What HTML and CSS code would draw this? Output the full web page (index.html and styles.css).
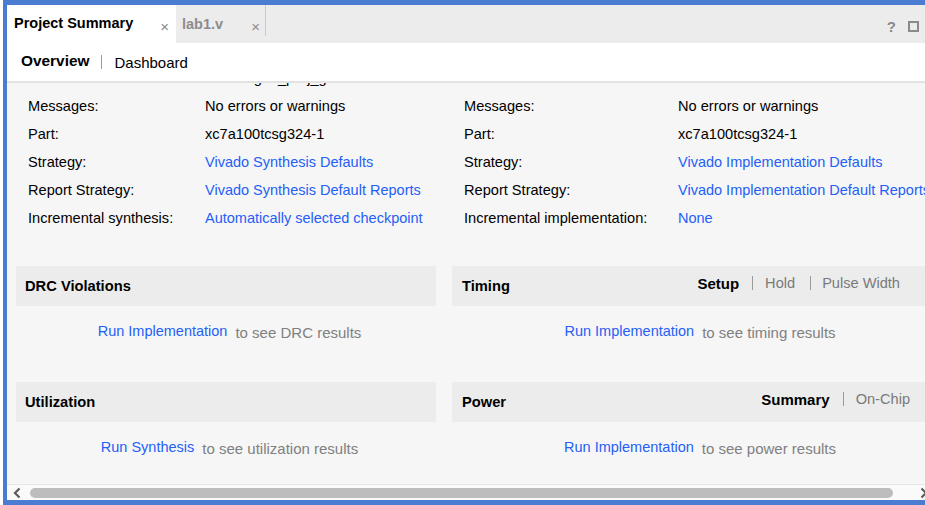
FILE: index.html
```html
<!DOCTYPE html>
<html>
<head>
<meta charset="utf-8">
<link rel="stylesheet" href="styles.css">
</head>
<body>
<div class="window">
  <div class="tabbar">
    <div class="tab active"><span class="tab-name">Project Summary</span><span class="close">×</span></div>
    <div class="tab other"><span class="tab-name">lab1.v</span><span class="close">×</span></div>
    <div class="icons">
      <span class="help">?</span>
      <span class="maxbox"></span>
    </div>
  </div>
  <div class="subtabs">
    <span class="sub active">Overview</span>
    <span class="vsep"></span>
    <span class="sub">Dashboard</span>
  </div>
  <div class="content">
    <div class="inner">
      <div class="props">
        <div class="col left">
          <div class="row cut"><span class="lbl"></span><span class="val">&nbsp;&nbsp;&nbsp;&nbsp;&nbsp;&nbsp;&nbsp;&nbsp;&nbsp;&nbsp;&nbsp; g&nbsp;&nbsp;&nbsp; _proj_g</span></div>
          <div class="row"><span class="lbl">Messages:</span><span class="val">No errors or warnings</span></div>
          <div class="row"><span class="lbl">Part:</span><span class="val">xc7a100tcsg324-1</span></div>
          <div class="row"><span class="lbl">Strategy:</span><a class="val link">Vivado Synthesis Defaults</a></div>
          <div class="row"><span class="lbl">Report Strategy:</span><a class="val link">Vivado Synthesis Default Reports</a></div>
          <div class="row"><span class="lbl">Incremental synthesis:</span><a class="val link">Automatically selected checkpoint</a></div>
        </div>
        <div class="col right">
          <div class="row cut"><span class="lbl"></span><span class="val"></span></div>
          <div class="row"><span class="lbl">Messages:</span><span class="val">No errors or warnings</span></div>
          <div class="row"><span class="lbl">Part:</span><span class="val">xc7a100tcsg324-1</span></div>
          <div class="row"><span class="lbl">Strategy:</span><a class="val link">Vivado Implementation Defaults</a></div>
          <div class="row"><span class="lbl">Report Strategy:</span><a class="val link">Vivado Implementation Default Reports</a></div>
          <div class="row"><span class="lbl">Incremental implementation:</span><a class="val link">None</a></div>
        </div>
      </div>

      <div class="panels">
        <div class="panel narrow">
          <div class="phead"><span class="ptitle">DRC Violations</span></div>
          <div class="pbody"><a class="link">Run Implementation</a><span class="hint">to see DRC results</span></div>
        </div>
        <div class="panel wide">
          <div class="phead"><span class="ptitle">Timing</span>
            <div class="ptabs timing-tabs">
              <span class="ptab on">Setup</span><span class="psep"></span><span class="ptab">Hold</span><span class="psep wider"></span><span class="ptab">Pulse Width</span>
            </div>
          </div>
          <div class="pbody"><a class="link">Run Implementation</a><span class="hint">to see timing results</span></div>
        </div>
        <div class="panel narrow">
          <div class="phead"><span class="ptitle">Utilization</span></div>
          <div class="pbody"><a class="link">Run Synthesis</a><span class="hint">to see utilization results</span></div>
        </div>
        <div class="panel wide">
          <div class="phead"><span class="ptitle">Power</span>
            <div class="ptabs power-tabs">
              <span class="ptab on">Summary</span><span class="psep"></span><span class="ptab">On-Chip</span>
            </div>
          </div>
          <div class="pbody"><a class="link">Run Implementation</a><span class="hint">to see power results</span></div>
        </div>
      </div>
    </div>
  </div>
  <div class="hscroll">
    <svg class="arrow" width="8" height="12" viewBox="0 0 8 12"><path d="M6.5 1.5 L2 6 L6.5 10.5" fill="none" stroke="#5a5a5a" stroke-width="2.2"/></svg>
    <div class="thumb"></div>
    <svg class="arrow" width="8" height="12" viewBox="0 0 8 12"><path d="M1.5 1.5 L6 6 L1.5 10.5" fill="none" stroke="#5a5a5a" stroke-width="2.2"/></svg>
  </div>
</div>
</body>
</html>
```

FILE: styles.css
```css
* { box-sizing: border-box; }
html, body { margin: 0; padding: 0; background: #fff; }
body {
  font-family: "Liberation Sans", Arial, sans-serif;
  font-size: 14.6px;
  color: #000;
  width: 925px;
  height: 505px;
  overflow: hidden;
}
.window {
  margin-left: 3px;
  height: 505px;
  border-style: solid;
  border-color: #4a7cd1;
  border-width: 5px 0 5px 4px;
  display: flex;
  flex-direction: column;
  overflow: hidden;
}

/* top tab bar */
.tabbar {
  flex: none;
  height: 38px;
  background: #ececec;
  display: flex;
  align-items: stretch;
}
.tab {
  display: flex;
  align-items: center;
  font-weight: bold;
  font-size: 14.5px;
}
.tab.active {
  background: #fff;
  width: 169px;
  padding: 0 7px 0 7px;
}
.tab.other {
  width: 90px;
  padding: 8px 5px 0 6px;
  color: #8c8c8c;
  border-right: 1px solid #c9c9c9;
  margin-bottom: 7px;
}
.tab-name { margin-top: -2px; }
.close {
  margin-left: auto;
  font-weight: normal;
  font-size: 15px;
  color: #8a8a8a;
  margin-top: 4px;
}
.icons {
  margin-left: auto;
  display: flex;
  align-items: center;
  gap: 12px;
  padding-right: 6px;
  padding-top: 5px;
}
.help {
  font-weight: bold;
  font-size: 15px;
  color: #8a8a8a;
}
.maxbox {
  width: 11px;
  height: 11px;
  border: 2px solid #8a8a8a;
}

/* sub tabs */
.subtabs {
  flex: none;
  height: 40px;
  background: #fff;
  border-bottom: 2px solid #e3e3e3;
  display: flex;
  align-items: center;
  padding-left: 14px;
}
.sub { font-size: 15px; }
.sub.active { font-weight: bold; font-size: 15.4px; margin-top: -3px; }
.sub:not(.active) { margin-top: 1px; }
.vsep {
  width: 1px;
  height: 14px;
  background: #9a9a9a;
  margin: 0 12px;
}

/* content */
.content {
  flex: 1;
  background: #f6f6f6;
  overflow: hidden;
}
.inner { width: 980px; }
.props {
  display: flex;
  padding-left: 21px;
  margin-top: -19px;
}
.col.left { width: 436px; }
.col.right { width: 520px; }
.row {
  height: 28px;
  display: flex;
  align-items: center;
  white-space: nowrap;
}
.col.left .lbl { width: 177px; flex: none; }
.col.right .lbl { width: 214px; flex: none; }
.link {
  color: #245ff7;
  text-decoration: none;
  font-size: 14.5px;
}

.panels {
  margin-top: 34px;
  padding-left: 9px;
  display: grid;
  grid-template-columns: 420px 496px;
  column-gap: 16px;
  row-gap: 16px;
}
.phead {
  height: 40px;
  background: #ececec;
  display: flex;
  align-items: center;
  padding-left: 9px;
}
.panel.wide .phead { padding-left: 10px; }
.ptitle {
  font-weight: bold;
  font-size: 14.7px;
}
.ptabs {
  margin-left: auto;
  display: flex;
  align-items: center;
  margin-top: -6px;
  font-size: 14.6px;
}
.timing-tabs { padding-right: 48px; }
.power-tabs { padding-right: 38px; }
.ptab { color: #7a7a7a; }
.ptab.on { color: #000; font-weight: bold; font-size: 15px; }
.psep {
  width: 1px;
  height: 14px;
  background: #9a9a9a;
  margin: 0 12px 0 13px;
}
.psep.wider { margin: 0 11px 0 15px; }
.pbody {
  height: 60px;
  display: flex;
  justify-content: center;
  align-items: flex-start;
  padding-top: 17px;
  white-space: nowrap;
}
.panel.narrow .pbody { padding-left: 7px; }
.pbody .link { line-height: 16px; }
.hint {
  color: #808080;
  font-size: 15px;
  margin-left: 8px;
  margin-top: 2px;
  line-height: 16px;
}

/* horizontal scrollbar */
.hscroll {
  flex: none;
  height: 16px;
  border-top: 1px solid #e6e6e6;
  background: #fafafa;
  display: flex;
  align-items: center;
  padding-left: 6px;
  overflow: hidden;
}
.arrow { flex: none; }
.thumb {
  flex: none;
  width: 863px;
  height: 10px;
  border-radius: 5px;
  background: #bdbdbd;
  margin: 0 27px 0 9px;
}
```
